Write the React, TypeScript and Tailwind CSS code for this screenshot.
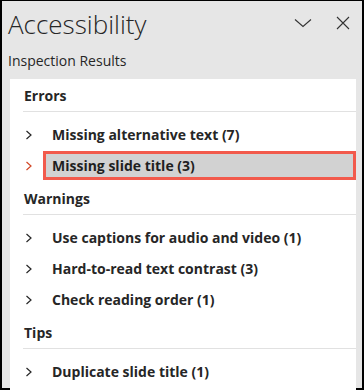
import React from "react";

type Item = { label: string; selected?: boolean };
type Group = { title: string; items: Item[] };

const groups: Group[] = [
  {
    title: "Errors",
    items: [
      { label: "Missing alternative text (7)" },
      { label: "Missing slide title (3)", selected: true },
    ],
  },
  {
    title: "Warnings",
    items: [
      { label: "Use captions for audio and video (1)" },
      { label: "Hard-to-read text contrast (3)" },
      { label: "Check reading order (1)" },
    ],
  },
  {
    title: "Tips",
    items: [{ label: "Duplicate slide title (1)" }],
  },
];

const Chevron = ({ className }: { className?: string }) => (
  <svg width="8" height="10" viewBox="0 0 8 10" className={className} fill="none">
    <path d="M1.5 1L6 5L1.5 9" stroke="currentColor" strokeWidth="1.2" />
  </svg>
);

function Row({ item }: { item: Item }) {
  return (
    <div className="flex h-[31px] items-center">
      <div className={item.selected ? "w-[20px] pl-[2px] text-[#d24726]" : "w-[20px] pl-[2px] text-[#262626]"}>
        <Chevron />
      </div>
      {item.selected ? (
        <div className="flex h-[29px] flex-1 items-center border-[3px] border-[#f25a4c] bg-[#d2d2d2] pl-[6px] text-[14px] font-bold text-[#1f1f1f]">
          {item.label}
        </div>
      ) : (
        <div className="pl-[9px] text-[14px] font-bold text-[#262626]">{item.label}</div>
      )}
    </div>
  );
}

export default function App() {
  return (
    <div
      className="flex h-[390px] w-[364px] flex-col border-b-2 border-l-2 border-r-2 border-t border-black bg-[#e6e6e6]"
      style={{ fontFamily: '"Open Sans", "Noto Sans", sans-serif' }}
    >
      <div className="flex items-start justify-between pl-[6px] pr-[12px]">
        <h1 className="mt-[6px] text-[26px] font-light leading-[34px] text-[#262626]">Accessibility</h1>
        <div className="mt-[15px] flex items-center gap-[24px] text-[#333]">
          <svg width="18" height="10" viewBox="0 0 18 10" fill="none">
            <path d="M1 1.5L9 8.5L17 1.5" stroke="currentColor" strokeWidth="1.1" />
          </svg>
          <svg width="14" height="14" viewBox="0 0 14 14" fill="none">
            <path d="M1 1L13 13M13 1L1 13" stroke="currentColor" strokeWidth="1.1" />
          </svg>
        </div>
      </div>
      <div className="mt-[10px] pl-[6px] text-[14px] leading-[20px] text-[#262626]">Inspection Results</div>
      <div className="mb-[2px] ml-[8px] mr-[6px] mt-[8px] flex-1 bg-white pl-[13px] pt-[6px]">
        {groups.map((g) => (
          <div key={g.title} className="mb-[7px]">
            <div className="border-b border-[#e1e1e1] pb-[4px] pl-[1px] text-[14px] font-bold leading-[22px] text-[#262626]">
              {g.title}
            </div>
            <div className="pt-[7px]">
              {g.items.map((it) => (
                <Row key={it.label} item={it} />
              ))}
            </div>
          </div>
        ))}
      </div>
    </div>
  );
}
